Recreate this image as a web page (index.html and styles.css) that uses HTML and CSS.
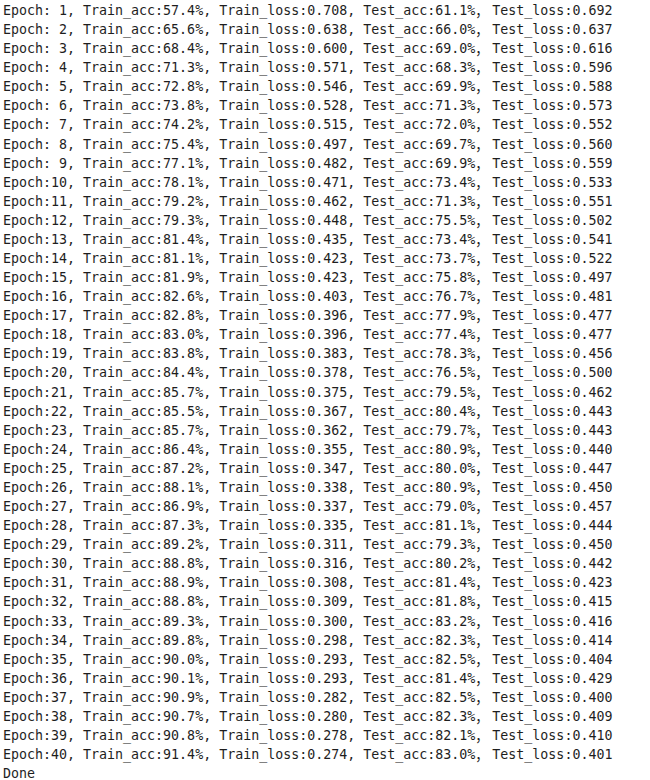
FILE: index.html
```html
<!DOCTYPE html>
<html>
<head>
<meta charset="utf-8">
<link rel="stylesheet" href="styles.css">
</head>
<body>
<div class="out">
<div class="ln">Epoch: 1, Train_acc:57.4%, Train_loss:0.708, Test_acc:61.1%<span class="fw">，</span>Test_loss:0.692</div>
<div class="ln">Epoch: 2, Train_acc:65.6%, Train_loss:0.638, Test_acc:66.0%<span class="fw">，</span>Test_loss:0.637</div>
<div class="ln">Epoch: 3, Train_acc:68.4%, Train_loss:0.600, Test_acc:69.0%<span class="fw">，</span>Test_loss:0.616</div>
<div class="ln">Epoch: 4, Train_acc:71.3%, Train_loss:0.571, Test_acc:68.3%<span class="fw">，</span>Test_loss:0.596</div>
<div class="ln">Epoch: 5, Train_acc:72.8%, Train_loss:0.546, Test_acc:69.9%<span class="fw">，</span>Test_loss:0.588</div>
<div class="ln">Epoch: 6, Train_acc:73.8%, Train_loss:0.528, Test_acc:71.3%<span class="fw">，</span>Test_loss:0.573</div>
<div class="ln">Epoch: 7, Train_acc:74.2%, Train_loss:0.515, Test_acc:72.0%<span class="fw">，</span>Test_loss:0.552</div>
<div class="ln">Epoch: 8, Train_acc:75.4%, Train_loss:0.497, Test_acc:69.7%<span class="fw">，</span>Test_loss:0.560</div>
<div class="ln">Epoch: 9, Train_acc:77.1%, Train_loss:0.482, Test_acc:69.9%<span class="fw">，</span>Test_loss:0.559</div>
<div class="ln">Epoch:10, Train_acc:78.1%, Train_loss:0.471, Test_acc:73.4%<span class="fw">，</span>Test_loss:0.533</div>
<div class="ln">Epoch:11, Train_acc:79.2%, Train_loss:0.462, Test_acc:71.3%<span class="fw">，</span>Test_loss:0.551</div>
<div class="ln">Epoch:12, Train_acc:79.3%, Train_loss:0.448, Test_acc:75.5%<span class="fw">，</span>Test_loss:0.502</div>
<div class="ln">Epoch:13, Train_acc:81.4%, Train_loss:0.435, Test_acc:73.4%<span class="fw">，</span>Test_loss:0.541</div>
<div class="ln">Epoch:14, Train_acc:81.1%, Train_loss:0.423, Test_acc:73.7%<span class="fw">，</span>Test_loss:0.522</div>
<div class="ln">Epoch:15, Train_acc:81.9%, Train_loss:0.423, Test_acc:75.8%<span class="fw">，</span>Test_loss:0.497</div>
<div class="ln">Epoch:16, Train_acc:82.6%, Train_loss:0.403, Test_acc:76.7%<span class="fw">，</span>Test_loss:0.481</div>
<div class="ln">Epoch:17, Train_acc:82.8%, Train_loss:0.396, Test_acc:77.9%<span class="fw">，</span>Test_loss:0.477</div>
<div class="ln">Epoch:18, Train_acc:83.0%, Train_loss:0.396, Test_acc:77.4%<span class="fw">，</span>Test_loss:0.477</div>
<div class="ln">Epoch:19, Train_acc:83.8%, Train_loss:0.383, Test_acc:78.3%<span class="fw">，</span>Test_loss:0.456</div>
<div class="ln">Epoch:20, Train_acc:84.4%, Train_loss:0.378, Test_acc:76.5%<span class="fw">，</span>Test_loss:0.500</div>
<div class="ln">Epoch:21, Train_acc:85.7%, Train_loss:0.375, Test_acc:79.5%<span class="fw">，</span>Test_loss:0.462</div>
<div class="ln">Epoch:22, Train_acc:85.5%, Train_loss:0.367, Test_acc:80.4%<span class="fw">，</span>Test_loss:0.443</div>
<div class="ln">Epoch:23, Train_acc:85.7%, Train_loss:0.362, Test_acc:79.7%<span class="fw">，</span>Test_loss:0.443</div>
<div class="ln">Epoch:24, Train_acc:86.4%, Train_loss:0.355, Test_acc:80.9%<span class="fw">，</span>Test_loss:0.440</div>
<div class="ln">Epoch:25, Train_acc:87.2%, Train_loss:0.347, Test_acc:80.0%<span class="fw">，</span>Test_loss:0.447</div>
<div class="ln">Epoch:26, Train_acc:88.1%, Train_loss:0.338, Test_acc:80.9%<span class="fw">，</span>Test_loss:0.450</div>
<div class="ln">Epoch:27, Train_acc:86.9%, Train_loss:0.337, Test_acc:79.0%<span class="fw">，</span>Test_loss:0.457</div>
<div class="ln">Epoch:28, Train_acc:87.3%, Train_loss:0.335, Test_acc:81.1%<span class="fw">，</span>Test_loss:0.444</div>
<div class="ln">Epoch:29, Train_acc:89.2%, Train_loss:0.311, Test_acc:79.3%<span class="fw">，</span>Test_loss:0.450</div>
<div class="ln">Epoch:30, Train_acc:88.8%, Train_loss:0.316, Test_acc:80.2%<span class="fw">，</span>Test_loss:0.442</div>
<div class="ln">Epoch:31, Train_acc:88.9%, Train_loss:0.308, Test_acc:81.4%<span class="fw">，</span>Test_loss:0.423</div>
<div class="ln">Epoch:32, Train_acc:88.8%, Train_loss:0.309, Test_acc:81.8%<span class="fw">，</span>Test_loss:0.415</div>
<div class="ln">Epoch:33, Train_acc:89.3%, Train_loss:0.300, Test_acc:83.2%<span class="fw">，</span>Test_loss:0.416</div>
<div class="ln">Epoch:34, Train_acc:89.8%, Train_loss:0.298, Test_acc:82.3%<span class="fw">，</span>Test_loss:0.414</div>
<div class="ln">Epoch:35, Train_acc:90.0%, Train_loss:0.293, Test_acc:82.5%<span class="fw">，</span>Test_loss:0.404</div>
<div class="ln">Epoch:36, Train_acc:90.1%, Train_loss:0.293, Test_acc:81.4%<span class="fw">，</span>Test_loss:0.429</div>
<div class="ln">Epoch:37, Train_acc:90.9%, Train_loss:0.282, Test_acc:82.5%<span class="fw">，</span>Test_loss:0.400</div>
<div class="ln">Epoch:38, Train_acc:90.7%, Train_loss:0.280, Test_acc:82.3%<span class="fw">，</span>Test_loss:0.409</div>
<div class="ln">Epoch:39, Train_acc:90.8%, Train_loss:0.278, Test_acc:82.1%<span class="fw">，</span>Test_loss:0.410</div>
<div class="ln">Epoch:40, Train_acc:91.4%, Train_loss:0.274, Test_acc:83.0%<span class="fw">，</span>Test_loss:0.401</div>
<div class="ln">Done</div>
</div>
</body>
</html>
```
FILE: styles.css
```css
html, body {
  margin: 0;
  padding: 0;
  background: #ffffff;
}
.out {
  padding: 1px 0 0 3px;
  font-family: "DejaVu Sans Mono", "Liberation Mono", "Noto Sans CJK SC", monospace;
  font-size: 13.3px;
  color: #1e1e1e;
}
.ln {
  height: 19.08px;
  line-height: 19.08px;
  white-space: pre;
}
.fw {
  display: inline-block;
  width: 17px;
  height: 19.08px;
  vertical-align: top;
  font-family: "Noto Sans CJK SC", sans-serif;
  line-height: 19.08px;
}
```
